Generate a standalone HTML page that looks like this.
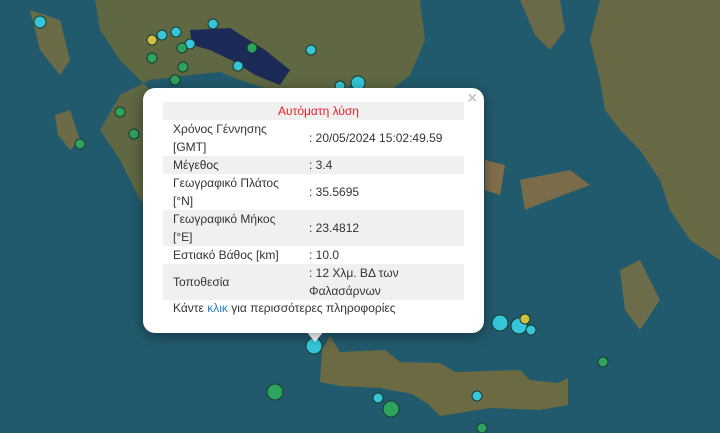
<!DOCTYPE html>
<html><head><meta charset="utf-8"><style>
body{margin:0;width:720px;height:433px;overflow:hidden;background:#215a6e;font-family:"Liberation Sans",sans-serif;position:relative}
svg.map{position:absolute;left:0;top:0}
.pop{position:absolute;left:143px;top:88px;width:341px;height:245px;background:#fff;border-radius:12px;box-shadow:0 3px 14px rgba(0,0,0,.4)}
.tip{position:absolute;left:305px;top:330px;width:0;height:0;border-left:10px solid transparent;border-right:10px solid transparent;border-top:12px solid #fff}
.x{position:absolute;right:7px;top:2px;color:#c3c3c3;font:bold 16px "Liberation Sans",sans-serif}
table{position:absolute;left:20px;top:14px;width:301px;border-collapse:collapse;font-size:12px;color:#333;line-height:18px}
td{padding:0 0 0 10px;vertical-align:middle}
tr.g{background:#f0f0f0}
td.v{width:155px;padding-left:3px}
.h{color:#e8202a;text-align:center;height:18px}
.f{position:absolute;left:30px;top:213px;font-size:12px;color:#333}
.f span{color:#2a7fc0}
</style></head><body>
<svg class="map" width="720" height="433">
<rect width="720" height="433" fill="#225a6d"/>
<path d="M95,0 L420,0 L425,40 L410,75 L385,95 L350,85 L330,100 L300,95 L270,90 L240,80 L220,72 L190,75 L150,80 L120,95 L100,130 L120,160 L140,200 L150,210 L150,90 L120,60 L100,30Z" fill="#5f6843"/>
<path d="M190,30 L230,28 L265,50 L290,70 L280,85 L255,75 L235,62 L210,50 L192,45Z" fill="#1c2a57"/>
<path d="M30,10 L60,20 L70,60 L60,75 L40,50Z" fill="#6b6b48"/>
<path d="M55,115 L70,110 L80,140 L70,150 L58,135Z" fill="#6b6b48"/>
<path d="M600,0 L720,0 L720,260 L690,240 L670,210 L660,180 L640,150 L620,130 L605,110 L600,80 L590,40Z" fill="#676945"/>
<path d="M520,0 L560,0 L565,30 L550,50 L535,35Z" fill="#6a6a48"/>
<path d="M485,160 L505,165 L500,195 L485,190Z" fill="#826e4c"/>
<path d="M520,180 L570,170 L590,185 L550,200 L525,210Z" fill="#7a6c4a"/>
<path d="M620,270 L640,260 L660,300 L640,330 L625,310Z" fill="#6d6c4a"/>
<path d="M322,350 L330,336 L340,352 L385,350 L400,362 L440,363 L455,372 L520,370 L530,380 L558,383 L568,378 L568,405 L540,410 L490,408 L440,416 L428,404 L412,394 L380,388 L340,386 L320,382Z" fill="#6b6a43"/>
<g stroke="#1a3a30" stroke-width="1">
<circle cx="40" cy="22" r="6" fill="#35c6d9"/><circle cx="152" cy="40" r="5" fill="#d4c040"/><circle cx="162" cy="35" r="5" fill="#35c6d9"/>
<circle cx="176" cy="32" r="5" fill="#35c6d9"/><circle cx="190" cy="44" r="5" fill="#35c6d9"/><circle cx="213" cy="24" r="5" fill="#35c6d9"/>
<circle cx="252" cy="48" r="5" fill="#2ea35e"/><circle cx="311" cy="50" r="5" fill="#35c6d9"/><circle cx="238" cy="66" r="5" fill="#35c6d9"/>
<circle cx="183" cy="67" r="5" fill="#2ea35e"/><circle cx="152" cy="58" r="5" fill="#2ea35e"/><circle cx="120" cy="112" r="5" fill="#2ea35e"/>
<circle cx="134" cy="134" r="5" fill="#2ea35e"/><circle cx="80" cy="144" r="5" fill="#2ea35e"/><circle cx="340" cy="86" r="5" fill="#35c6d9"/>
<circle cx="358" cy="83" r="7" fill="#35c6d9"/><circle cx="182" cy="48" r="5" fill="#2ea35e"/><circle cx="175" cy="80" r="5" fill="#2ea35e"/>
<circle cx="500" cy="323" r="8" fill="#35c6d9"/><circle cx="519" cy="326" r="8" fill="#35c6d9"/><circle cx="525" cy="319" r="5" fill="#d4c040"/><circle cx="531" cy="330" r="5" fill="#35c6d9"/>
<circle cx="314" cy="346" r="8" fill="#35c6d9"/><circle cx="603" cy="362" r="5" fill="#2ea35e"/><circle cx="275" cy="392" r="8" fill="#2ea35e"/>
<circle cx="378" cy="398" r="5" fill="#35c6d9"/><circle cx="391" cy="409" r="8" fill="#2ea35e"/><circle cx="477" cy="396" r="5" fill="#35c6d9"/><circle cx="482" cy="428" r="5" fill="#2ea35e"/>
</g>
</svg>
<div class="tip"></div>
<div class="pop"><div class="x">×</div>
<table>
<tr class="g"><td colspan="2" class="h">Αυτόματη λύση</td></tr>
<tr><td>Χρόνος Γέννησης<br>[GMT]</td><td class="v">: 20/05/2024 15:02:49.59</td></tr>
<tr class="g"><td>Μέγεθος</td><td class="v">: 3.4</td></tr>
<tr><td>Γεωγραφικό Πλάτος<br>[°N]</td><td class="v">: 35.5695</td></tr>
<tr class="g"><td>Γεωγραφικό Μήκος<br>[°E]</td><td class="v">: 23.4812</td></tr>
<tr><td>Εστιακό Βάθος [km]</td><td class="v">: 10.0</td></tr>
<tr class="g"><td>Τοποθεσία</td><td class="v">: 12 Χλμ. ΒΔ των<br>Φαλασάρνων</td></tr>
</table>
<div class="f">Κάντε <span>κλικ</span> για περισσότερες πληροφορίες</div>
</div>
</body></html>
